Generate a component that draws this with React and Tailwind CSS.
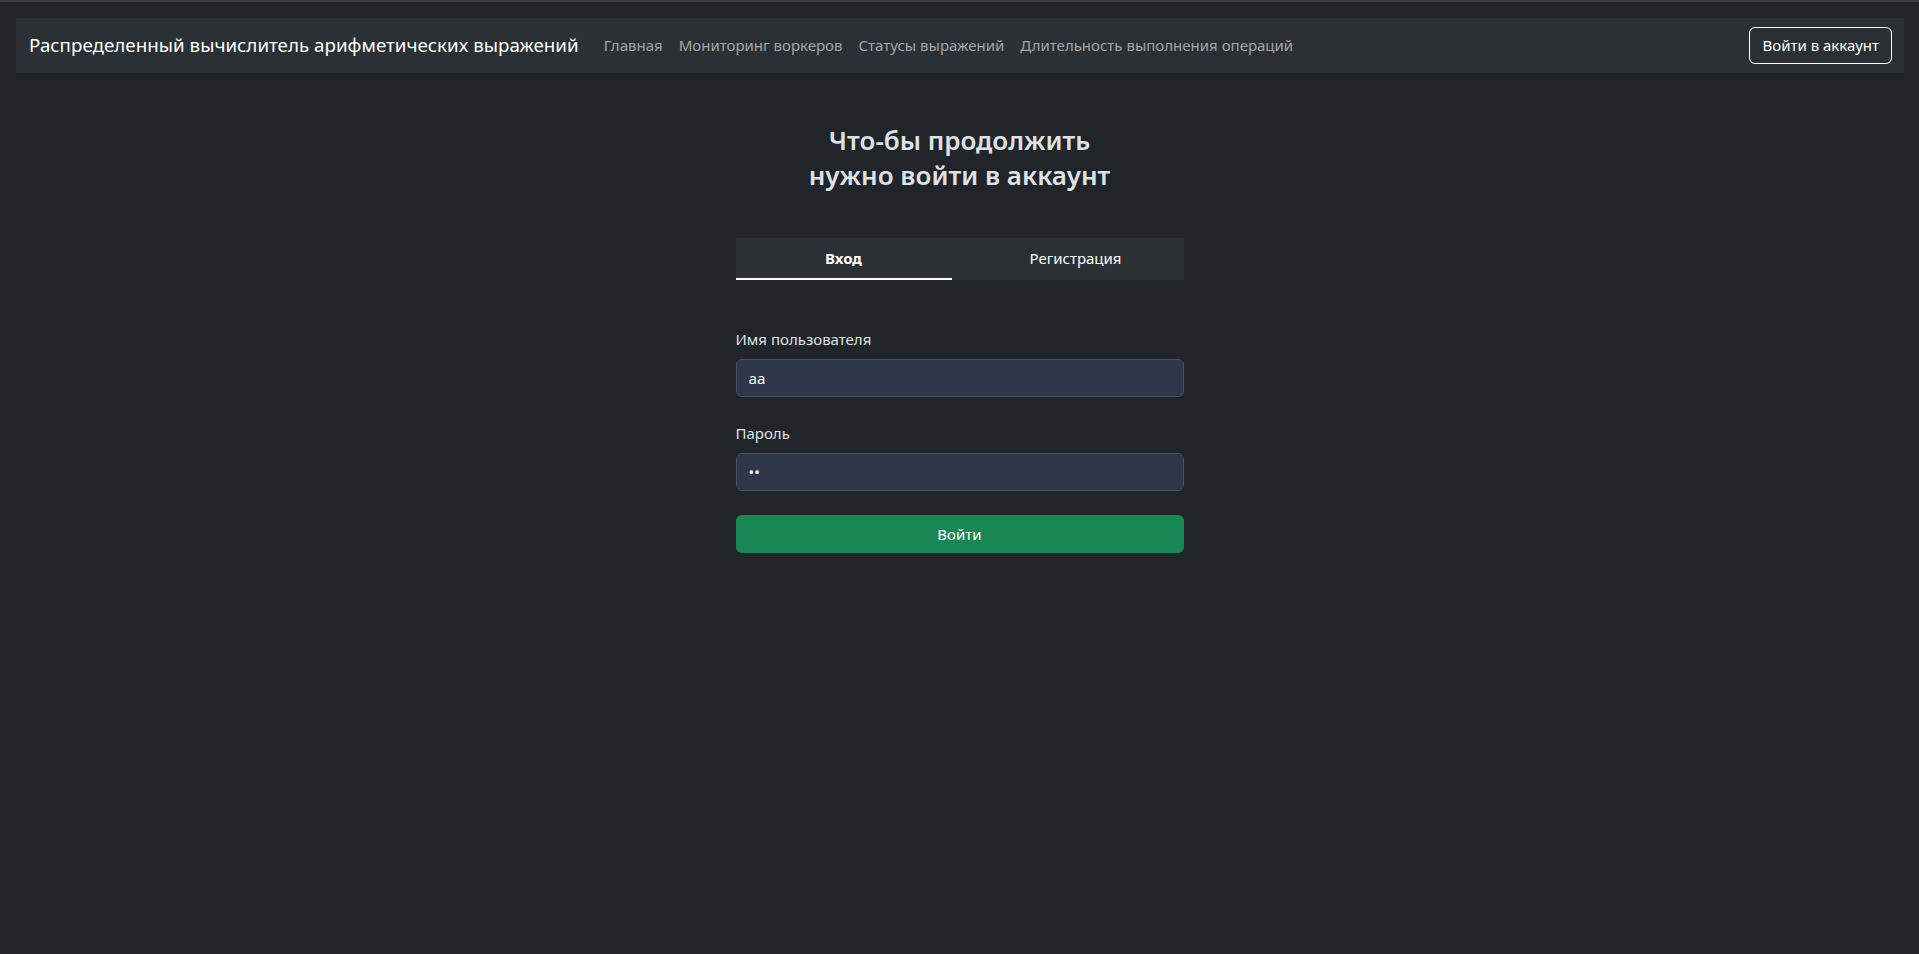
import React, { useState } from 'react';

const links = ['Главная', 'Мониторинг воркеров', 'Статусы выражений', 'Длительность выполнения операций'];

const Navbar = () => (
  <nav className="mt-4 ml-4 mr-[15px] h-[55px] bg-[#2b3035] flex items-center pl-[13px] pr-3">
    <span className="text-[18.8px] text-white whitespace-nowrap">
      Распределенный вычислитель арифметических выражений
    </span>
    <ul className="flex items-center ml-[17px]">
      {links.map((l) => (
        <li key={l} className="px-2 text-[15px] text-[#a3a5a8] whitespace-nowrap">
          {l}
        </li>
      ))}
    </ul>
    <button className="ml-auto h-[37px] px-3 border border-white rounded-md text-white text-[15px]">
      Войти в аккаунт
    </button>
  </nav>
);

const Field = ({ label, type, value }) => (
  <div className="flex flex-col">
    <label className="text-[15px] leading-6 text-[#dee2e6] mb-2">{label}</label>
    <input
      type={type}
      defaultValue={value}
      className="h-[38px] px-3 rounded-md bg-[#2f384b] border border-[#495262] text-white text-[15px] outline-none"
    />
  </div>
);

export default function App() {
  const [tab, setTab] = useState('login');

  return (
    <div className="min-h-screen bg-[#212529] font-['Noto_Sans',sans-serif]">
      <div className="h-[2px] bg-[#3c3d42]" />
      <Navbar />

      <main className="w-[448px] mx-auto flex flex-col">
        <h3 className="mt-[50px] text-center text-[26px] leading-[35px] font-semibold text-[#dee2e6]">
          Что-бы продолжить
          <br />
          нужно войти в аккаунт
        </h3>

        {/* вкладки вход / регистрация */}
        <div className="mt-[45px] flex bg-[#2b3035] h-[42px]">
          <button
            onClick={() => setTab('login')}
            className={
              'w-[216px] text-[15px] text-white border-b-2 ' +
              (tab === 'login' ? 'font-bold border-white' : 'border-transparent')
            }
          >
            Вход
          </button>
          <button
            onClick={() => setTab('register')}
            className={
              'flex-1 pl-4 text-[15px] text-white border-b-2 ' +
              (tab === 'register' ? 'font-bold border-white' : 'border-transparent')
            }
          >
            Регистрация
          </button>
        </div>

        <form className="mt-[47px] flex flex-col gap-6" onSubmit={(e) => e.preventDefault()}>
          <Field label="Имя пользователя" type="text" value="aa" />
          <Field label="Пароль" type="password" value="aa" />
          <button className="h-[38px] rounded-md bg-[#198754] text-white text-[15px]">Войти</button>
        </form>
      </main>
    </div>
  );
}
